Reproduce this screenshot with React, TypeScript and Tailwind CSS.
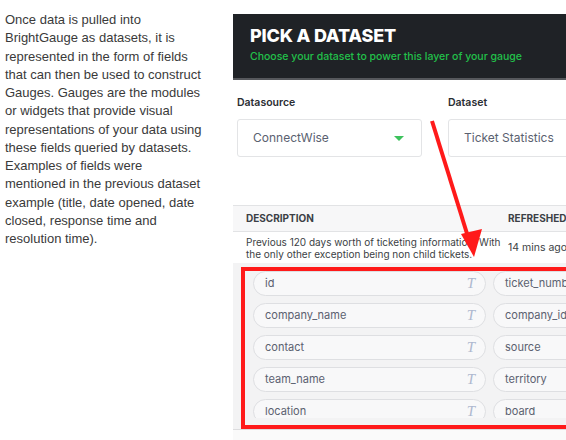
import React from 'react';

const fields: [string, string][] = [
    ['id', 'ticket_number'],
    ['company_name', 'company_id'],
    ['contact', 'source'],
    ['team_name', 'territory'],
    ['location', 'board'],
];

const Pill: React.FC<{ name: string; width: string; showType?: boolean }> = ({ name, width, showType }) => (
    <div className={`${width} h-[25px] shrink-0 rounded-full border border-[#dedfe2] bg-[#f8f8f9] flex items-center justify-between pl-[11px] pr-[10px]`}>
        <span className="text-[11px] text-[#5b6170] whitespace-nowrap">{name}</span>
        {showType && (
            <span className="text-[15px] italic text-[#aeb8cf]" style={{ fontFamily: '"Liberation Serif", serif' }}>
                T
            </span>
        )}
    </div>
);

export default function App() {
    return (
        <div className="relative w-[566px] h-[440px] overflow-hidden bg-white flex">
            {/* Article text */}
            <div className="w-[233px] shrink-0 pl-[5px] pt-[11px]">
                <p className="text-[13px] leading-[18.25px] text-[#3a3a3a]" style={{ fontFamily: '"Liberation Sans", Arial, sans-serif' }}>
                    Once data is pulled into<br />
                    BrightGauge as datasets, it is<br />
                    represented in the form of fields<br />
                    that can then be used to construct<br />
                    Gauges. Gauges are the modules<br />
                    or widgets that provide visual<br />
                    representations of your data using<br />
                    these fields queried by datasets.<br />
                    Examples of fields were<br />
                    mentioned in the previous dataset<br />
                    example (title, date opened, date<br />
                    closed, response time and<br />
                    resolution time).
                </p>
            </div>

            {/* App screenshot */}
            <div className="flex-1 pt-[14px] overflow-hidden" style={{ fontFamily: 'Inter, "Noto Sans", sans-serif' }}>
                <div className="w-[400px] flex flex-col">
                    <div className="h-[66px] bg-[#1f2226] border-b-2 border-[#56585c] pl-[17px] pt-[12px]">
                        <div className="text-[18px] leading-[20px] font-extrabold text-white tracking-[-0.2px]">PICK A DATASET</div>
                        <div className="text-[10.5px] leading-[14px] font-medium text-[#22c04a] mt-[4px]">
                            Choose your dataset to power this layer of your gauge
                        </div>
                    </div>

                    <div className="h-[125px] flex pl-[4px] pt-[16px] gap-[26px]">
                        <div className="w-[185px] flex flex-col">
                            <span className="text-[10.5px] leading-[14px] font-semibold text-[#2a2d33]">Datasource</span>
                            <div className="mt-[9px] h-[38px] rounded-[3px] border border-[#e3e4e6] flex items-center justify-between pl-[15px] pr-[17px]">
                                <span className="text-[12px] text-[#5a6170]">ConnectWise</span>
                                <span className="w-0 h-0 border-l-[5px] border-r-[5px] border-t-[5px] border-l-transparent border-r-transparent border-t-[#3dc25c]" />
                            </div>
                        </div>
                        <div className="w-[185px] flex flex-col">
                            <span className="text-[10.5px] leading-[14px] font-semibold text-[#2a2d33]">Dataset</span>
                            <div className="mt-[9px] h-[38px] rounded-[3px] border border-[#e3e4e6] flex items-center pl-[15px]">
                                <span className="text-[12px] text-[#5a6170] whitespace-nowrap">Ticket Statistics</span>
                            </div>
                        </div>
                    </div>

                    <div className="h-[27px] border-t border-b border-[#e2e3e5] bg-[#f7f7f8] flex items-center pl-[13px]">
                        <span className="w-[262px] text-[10px] font-bold text-[#3c3f45]">DESCRIPTION</span>
                        <span className="text-[10px] font-bold text-[#3c3f45]">REFRESHED</span>
                    </div>

                    <div className="h-[31px] flex items-center pl-[13px]">
                        <span className="w-[262px] shrink-0 text-[10px] leading-[12px] text-[#3c3f45] whitespace-nowrap">
                            Previous 120 days worth of ticketing information. With<br />
                            the only other exception being non child tickets.
                        </span>
                        <span className="text-[10.5px] text-[#3c3f45] whitespace-nowrap">14 mins ago</span>
                    </div>

                    <div className="h-[167px] bg-[#f3f3f4] border-b border-[#dcdcde]">
                        <div className="h-[155px] overflow-hidden pl-[20px] pt-[8px]">
                            <div className="flex flex-col gap-[7px]">
                                {fields.map(([a, b]) => (
                                    <div key={a} className="flex gap-[7px]">
                                        <Pill name={a} width="w-[233px]" showType />
                                        <Pill name={b} width="w-[233px]" showType />
                                    </div>
                                ))}
                            </div>
                        </div>
                    </div>
                    <div className="h-[40px] bg-[#fafafa]" />
                </div>
            </div>

            {/* Annotation box */}
            <div className="absolute left-[241px] top-[267px] w-[340px] h-[162px] border-4 border-[#ff1a1a]" />

            {/* Annotation arrow */}
            <svg className="absolute left-0 top-0" width="566" height="440" viewBox="0 0 566 440">
                <line x1="432" y1="121" x2="469" y2="240" stroke="#ff1a1a" strokeWidth="4" />
                <polygon points="474,257 461,234 482,229" fill="#ff1a1a" />
            </svg>
        </div>
    );
}
